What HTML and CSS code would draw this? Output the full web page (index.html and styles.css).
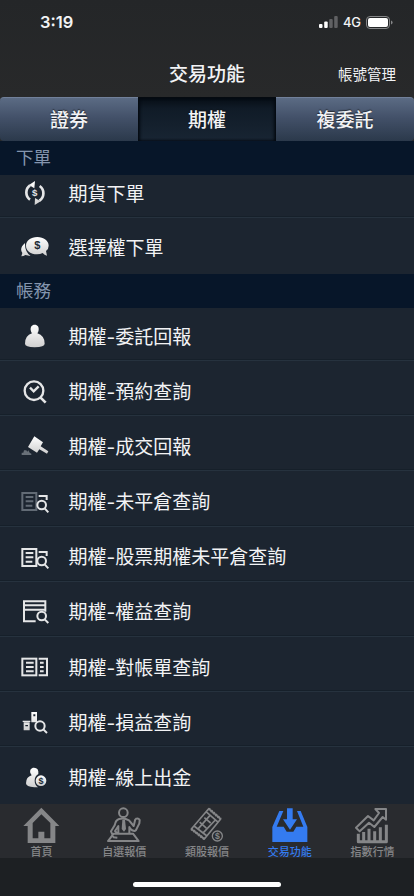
FILE: index.html
```html
<!DOCTYPE html>
<html lang="zh-Hant">
<head>
<meta charset="utf-8">
<meta name="viewport" content="width=device-width, initial-scale=1">
<title>交易功能</title>
<link rel="stylesheet" href="styles.css">
</head>
<body>
<svg class="defs" aria-hidden="true">
  <defs>
    <linearGradient id="sheen" x1="0" y1="0" x2="0" y2="1"><stop offset="0" stop-color="#fff"/><stop offset="1" stop-color="#cfcfcf"/></linearGradient>
    <g id="doc-page"><rect x="7" y="18" width="42" height="51"/><path d="M17 30H40M17 43H40M17 56H37"/></g>
    <g id="doc-lens"><path d="M56 27H80V39"/><circle cx="65" cy="54" r="13"/><path d="M74 64L85 76"/></g>
  </defs>
</svg>
<div class="screen">
  <header>
    <div class="status">
      <span class="time">3:19</span>
      <div class="signals">
        <svg class="bars" viewBox="0 0 19 12"><rect x="0" y="8" width="3.5" height="4" rx="1"/><rect x="5.2" y="5.5" width="3.5" height="6.5" rx="1"/><g class="off"><rect x="10.2" y="3" width="3.5" height="9" rx="1"/><rect x="15.2" y="0" width="3.5" height="12" rx="1"/></g></svg>
        <span class="net">4G</span>
        <svg class="battery" viewBox="0 0 27 13"><rect class="shell" x=".5" y=".5" width="23" height="12" rx="3.5"/><rect x="2" y="2" width="20" height="9" rx="2"/><path class="cap" d="M25 4.5Q26.6 5 26.6 6.5T25 8.5Z"/></svg>
      </div>
    </div>
    <div class="titlebar">
      <h1>交易功能</h1>
      <a class="manage">帳號管理</a>
    </div>
  </header>
  <nav class="segments"><a>證券</a><a class="selected">期權</a><a>複委託</a></nav>
  <main>
    <h2>下單</h2>
    <ul>
      <li class="clipped"><svg viewBox="0 0 90 84" class="line"><path d="M30 62A25 26 0 0 1 30 19M58 65A25 26 0 0 0 59 21" stroke-width="8"/><g class="solid"><path d="M27 18L45 6L43 28ZM45 57L62 67L44 78Z"/><text x="44" y="52" font-size="29">$</text></g></svg><span>期貨下單</span></li>
      <li class="after-clipped"><svg viewBox="0 0 90 84" class="solid"><path d="M15 30Q-3 46 7 60L4 70Q11 70 16 66L32 69Q14 56 15 30Z"/><path d="M52 12C32 12 18 23 18 38C18 54 32 64 51 64Q61 64 68 60Q73 67 81 68L78 54Q86 48 86 38C86 23 71 12 52 12Z"/><text class="dark" x="52" y="49" font-size="33">$</text></svg><span>選擇權下單</span></li>
    </ul>
    <h2 class="second">帳務</h2>
    <ul>
      <li class="first"><svg viewBox="0 0 90 84" class="solid"><path d="M44 8C35 8 31 15 32 24Q33 31 36 34Q15 41 15 65Q15 75 44 76Q74 75 74 65Q74 41 52 34Q55 31 56 24C57 15 53 8 44 8Z"/></svg><span>期權-委託回報</span></li>
      <li><svg viewBox="0 0 90 84" class="line"><circle cx="42" cy="41" r="28" stroke-width="7"/><path d="M61 61L77 77" stroke-width="8"/><path d="M30 32L41 43L56 28" stroke-width="7"/></svg><span>期權-預約查詢</span></li>
      <li><svg viewBox="0 0 90 84" class="solid"><path d="M43 13L69 31L62 43L85 58L81 65L58 52L51 62L24 45Z"/><path class="ash" d="M5 69V62H10L12 55H19L22 59L25 55L29 62L34 65V69Z"/></svg><span>期權-成交回報</span></li>
      <li><svg viewBox="0 0 90 84" class="line"><use href="#doc-page" class="muted"/><use href="#doc-lens"/></svg><span>期權-未平倉查詢</span></li>
      <li><svg viewBox="0 0 90 84" class="line"><use href="#doc-page"/><use href="#doc-lens"/></svg><span>期權-股票期權未平倉查詢</span></li>
      <li><svg viewBox="0 0 90 84" class="line"><path d="M47 70H12V10H76V41M12 22H76M12 35H76"/><circle cx="65" cy="54" r="13"/><path d="M74 64L85 75"/></svg><span>期權-權益查詢</span></li>
      <li><svg viewBox="0 0 90 84" class="line"><rect x="7" y="17" width="42" height="50"/><path d="M18 29H41M18 42H41M18 55H41M56 17H81V67H56M60 29H71M60 42H71M60 55H71"/></svg><span>期權-對帳單查詢</span></li>
      <li><svg viewBox="0 0 90 84" class="line"><path class="solid" fill-rule="evenodd" d="M34 12H51V43H34ZM40 19V25H46V19ZM11 43H29V67H11ZM16 51V55H24V51ZM8 38H31V42H8Z"/><circle cx="60" cy="54" r="14"/><path d="M70 64L81 75"/></svg><span>期權-損益查詢</span></li>
      <li><svg viewBox="0 0 90 84" class="solid"><path d="M42 14C33 14 29 21 31 30L35 37Q18 42 18 61Q18 71 43 73H54Q44 65 44 53Q44 40 55 33Q57 14 42 14Z"/><circle cx="63" cy="53" r="16"/><text class="dark" x="63" y="63" font-size="27">$</text></svg><span>期權-線上出金</span></li>
    </ul>
  </main>
  <nav class="tabs">
    <a><svg viewBox="0 0 110 110"><path class="fill" fill-rule="evenodd" d="M55 2L109 57H97V108H14V57H1ZM55 22L29 48V94H46V74H64V94H82V48Z"/></svg>首頁</a>
    <a><svg viewBox="0 0 110 110"><circle cx="52" cy="17" r="13"/><path d="M23 80H81L98 102H6ZM39 36Q55 32 69 40L83 57L88 36M88 36Q97 32 101 39L100 49L90 69Q84 76 73 65L70 60V79M39 36Q29 39 26 55L15 73L23 91L34 92M34 79L27 72L37 57V77"/><path class="fill" d="M49 38H57L60 66L54 74L47 66Z"/></svg>自選報價</a>
    <a><svg viewBox="0 0 110 110"><path d="M59 5L95 36L46 96L7 66ZM51 14L87 45M15 57L54 87M63 25L26 67M79 39L41 79M46 32L65 48M32 45L52 63" stroke-width="5"/><path d="M59 5L95 36M46 96L7 66" stroke-dasharray="5 4" stroke-width="8"/><circle class="coin" cx="85" cy="87" r="15"/><text x="85" y="96" font-size="26">$</text></svg>類股報價</a>
    <a class="current"><svg viewBox="0 0 110 110"><path class="fill" d="M48 4H65V37H78L57 68L36 37H48ZM25 12H37L17 59H38L47 74H67L76 59H97L78 12H89L109 60V105H4V60Z"/></svg>交易功能</a>
    <a><svg viewBox="0 0 110 110"><path d="M64 6H96V38L86 30L61 60L45 47L17 73L6 62L42 27L59 40L75 18Z"/><path d="M13 80V104H97V53M29 75V103M45 65V103M62 73V103M79 61V103M13 104H97" stroke-width="9"/></svg>指數行情</a>
  </nav>
  <footer><i></i></footer>
</div>
</body>
</html>
```

FILE: styles.css
```css
* { box-sizing: border-box; }
body {
  margin: 0;
  background: #1d2023;
  color: #f2f3f5;
  font-family: Inter, "Noto Sans CJK TC", sans-serif;
}
h1, h2, ul { margin: 0; padding: 0; font-weight: 400; list-style: none; }
.defs { display: block; width: 0; height: 0; }
.screen { display: flex; flex-direction: column; width: 414px; height: 896px; overflow: hidden; }

header { height: 97px; background: linear-gradient(#242628, #28292a); }
.status { display: flex; justify-content: space-between; align-items: center; height: 44px; padding: 0 21px 0 40px; }
.time { font-size: 16.5px; font-weight: 600; }
.signals { display: flex; align-items: center; fill: #fff; }
.bars { width: 19px; height: 12px; margin-right: 5px; }
.off { fill: #606163; }
.net { width: 23px; font-size: 13px; font-weight: 500; letter-spacing: -.3px; }
.battery { width: 27px; height: 13px; }
.shell { fill: none; stroke: #858688; }
.cap { fill: #858688; }
.titlebar { display: grid; grid-template-columns: 1fr auto 1fr; align-items: center; height: 56px; padding: 0 18px; }
h1 { grid-column: 2; font-size: 19px; font-weight: 500; }
.manage { justify-self: end; font-size: 14.5px; padding-top: 2px; }

.segments { display: grid; grid-template-columns: 138px 138px 138px; height: 44px; background: #28292a; }
.segments a {
  display: flex; align-items: center; justify-content: center;
  padding-bottom: 3px;
  font-size: 19px; font-weight: 500;
  text-shadow: 0 -1px 1px #111a;
  background: linear-gradient(#5b6b84, #435169 45%, #2b394b);
  border-top: 1px solid #71809a;
}
.segments a:first-child { border-radius: 4px 0 0 4px; }
.segments a:last-child { border-radius: 0 4px 4px 0; }
.segments .selected { background: linear-gradient(#060d15, #101b27 25%, #182533); border-color: #050a10; box-shadow: inset 2px 0 3px #040a11, inset -2px 0 3px #040a11; }

main { height: 663px; background: #1c2530; }
h2 { height: 34px; padding-left: 16px; background: #071629; color: #8495ae; font-size: 17.5px; line-height: 33px; }
h2.second { line-height: 34px; }
li { display: flex; align-items: center; height: 55.2px; padding: 4px 0 0 20px; border-bottom: 1px solid #26323e; box-shadow: inset 0 -1px #16202a; font-size: 19px; }
li svg { width: 30px; height: 28px; margin: 2px 18px 0 0; }
li.clipped { height: 43px; padding: 0 0 8px 20px; }
li.after-clipped { height: 56px; padding-top: 1px; }
li.first { height: 53px; padding-top: 2px; }
li span { padding-left: .5px; }
li:last-child { border-bottom-color: transparent; box-shadow: none; }
.line { fill: none; stroke: #e5e6e7; stroke-width: 6; }
.solid { fill: url(#sheen); stroke: none; }
.dark { fill: #202a34; }
.ash { fill: #687078; }
.muted { stroke: #626b75; }
text { font-family: "Liberation Sans", sans-serif; font-weight: 700; text-anchor: middle; }
.line text { fill: #e5e6e7; }

.tabs { display: grid; grid-template-columns: repeat(5, 1fr); height: 54px; background: #292b2f; }
.tabs a { display: flex; flex-direction: column; align-items: center; padding-top: 3px; color: #858688; font-size: 11px; line-height: 16px; font-weight: 500; }
.tabs svg { width: 36.7px; height: 36.7px; fill: none; stroke: currentColor; stroke-width: 6; stroke-linejoin: round; }
.tabs .fill, .tabs text { fill: currentColor; stroke: none; }
.tabs .coin { fill: #292b2f; stroke-width: 4; }
.tabs .current { color: #347bf0; }
footer { display: flex; justify-content: center; height: 38px; padding-top: 24px; background: #1d2023; }
footer i { width: 148px; height: 5px; border-radius: 3px; background: #fff; }
```
